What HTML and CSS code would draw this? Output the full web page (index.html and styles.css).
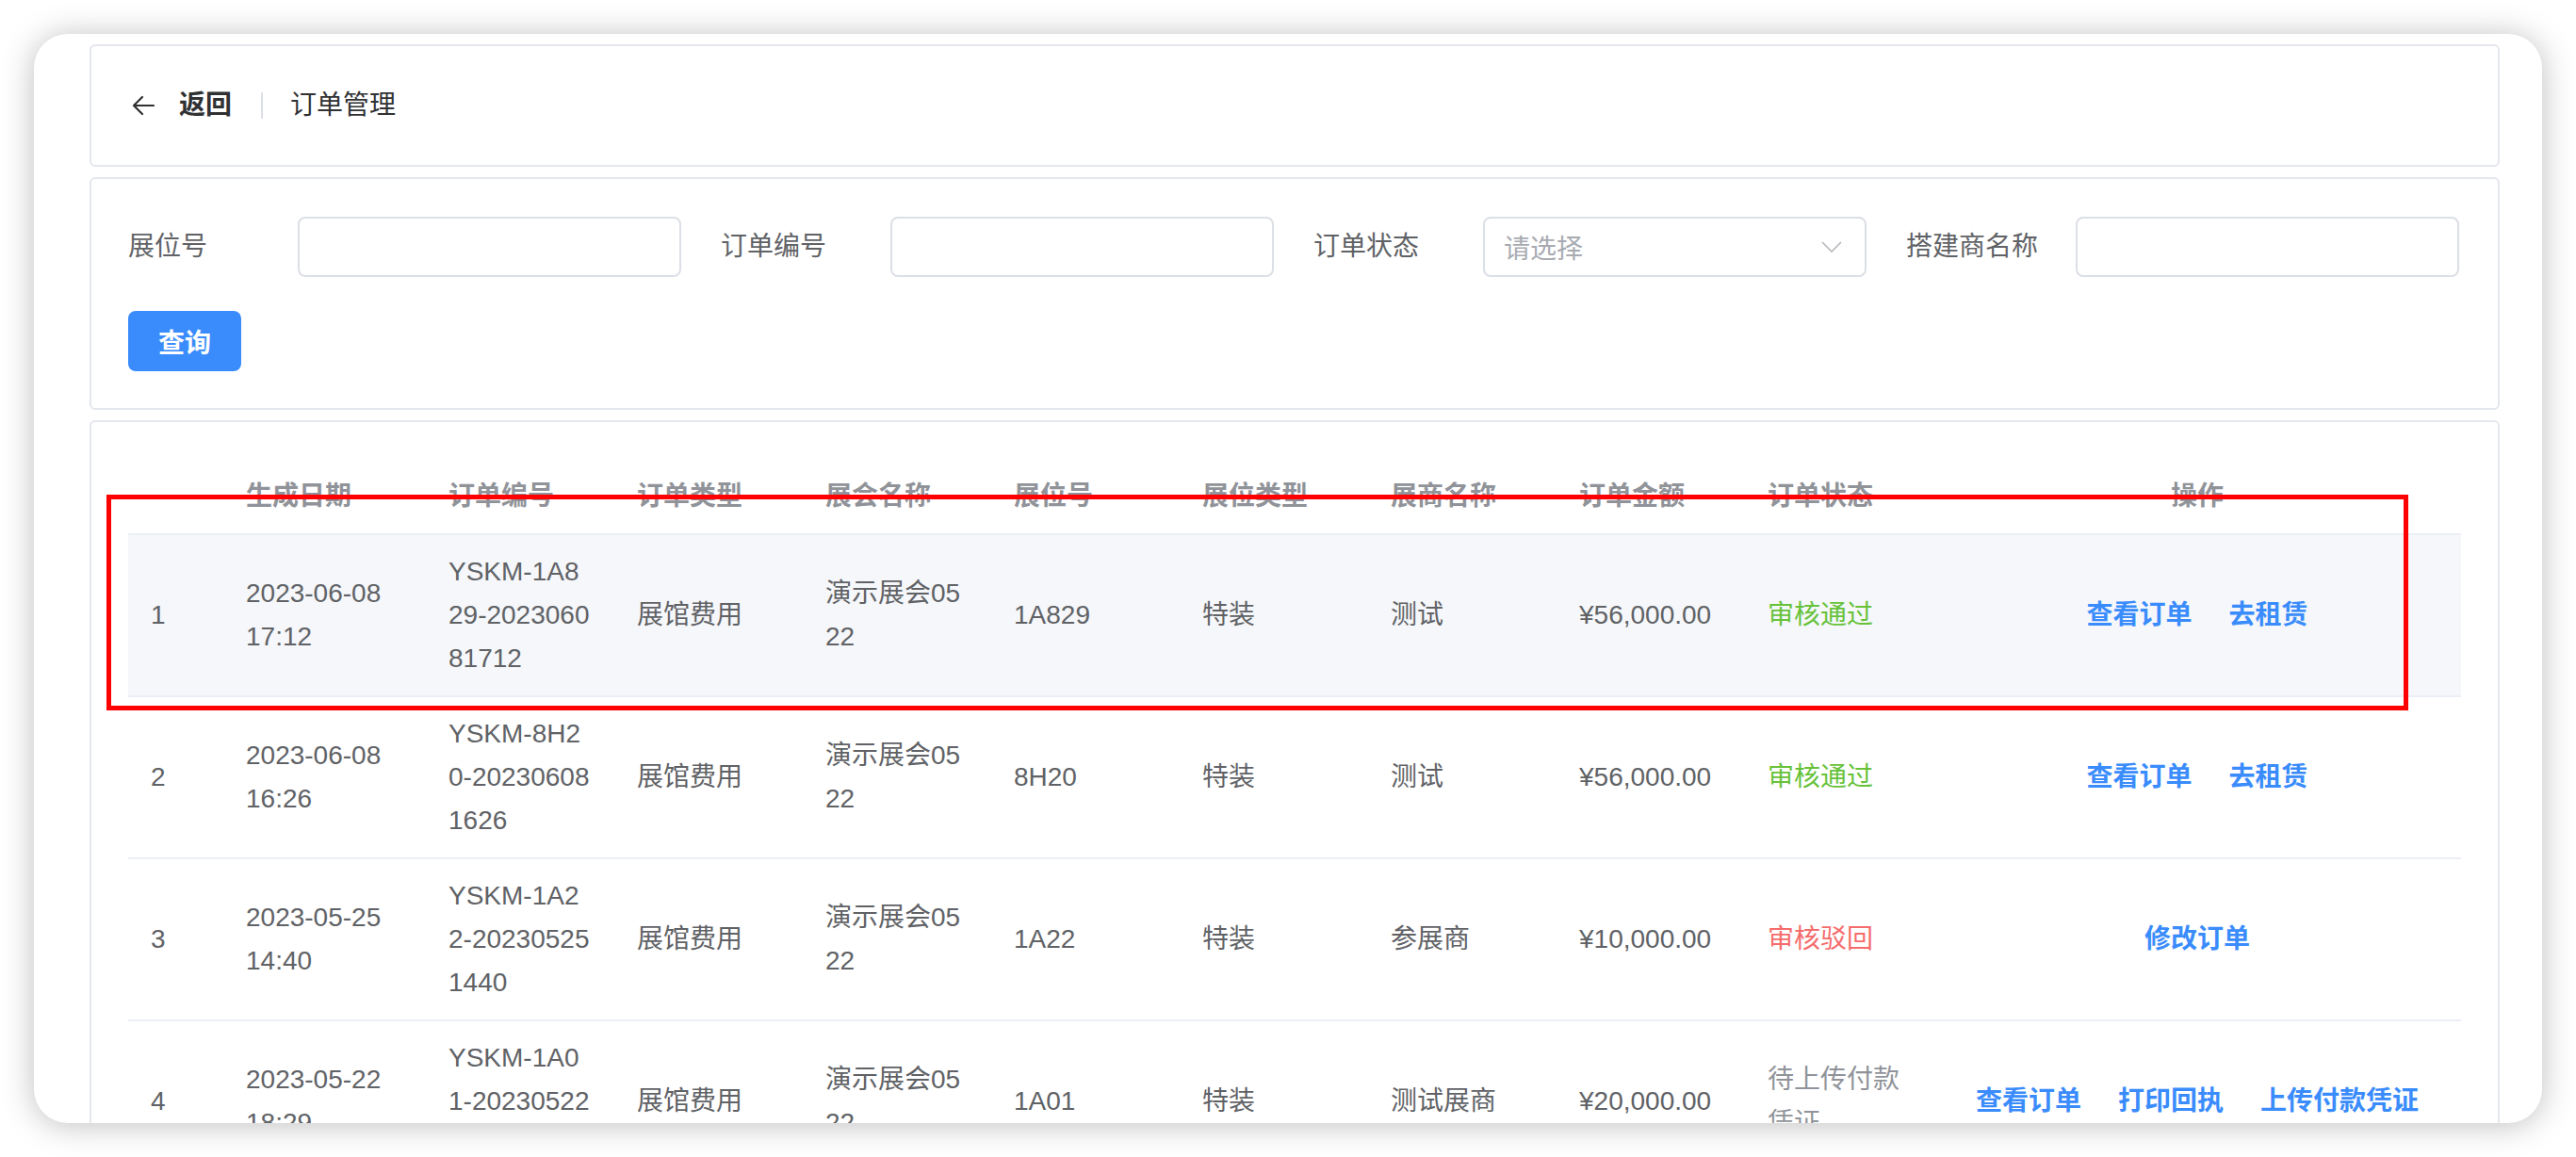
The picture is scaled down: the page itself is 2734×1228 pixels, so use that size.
FILE: index.html
```html
<!DOCTYPE html>
<html lang="zh-CN">
<head>
<meta charset="utf-8">
<title>订单管理</title>
<link rel="stylesheet" href="styles.css">
</head>
<body>
<div class="stage">
  <div class="window">
    <div class="card header-card">
      <span class="back">
        <svg class="back-icon" width="24" height="22" viewBox="0 0 24 22"><path d="M2 11H23M11 2L2 11L11 20" fill="none" stroke="#303133" stroke-width="2.2" stroke-linecap="round" stroke-linejoin="round"/></svg>
        <span class="back-text">返回</span>
      </span>
      <span class="divider"></span>
      <span class="page-title">订单管理</span>
    </div>

    <div class="card filter-card">
      <div class="form-row">
        <div class="form-item"><label class="form-label">展位号</label><div class="input"></div></div>
        <div class="form-item"><label class="form-label">订单编号</label><div class="input"></div></div>
        <div class="form-item"><label class="form-label">订单状态</label>
          <div class="input select"><span class="placeholder">请选择</span>
            <svg class="chevron" width="22" height="12" viewBox="0 0 22 12"><path d="M1 1L11 11L21 1" fill="none" stroke="#b4b7bd" stroke-width="1.6"/></svg>
          </div>
        </div>
        <div class="form-item"><label class="form-label">搭建商名称</label><div class="input"></div></div>
      </div>
      <button class="btn-primary">查询</button>
    </div>

    <div class="card table-card">
      <table class="grid">
        <colgroup>
          <col class="c-idx"><col class="c-date"><col class="c-std"><col class="c-std"><col class="c-std"><col class="c-std"><col class="c-std"><col class="c-std"><col class="c-std"><col class="c-std"><col class="c-ops">
        </colgroup>
        <thead>
          <tr><th></th><th>生成日期</th><th>订单编号</th><th>订单类型</th><th>展会名称</th><th>展位号</th><th>展位类型</th><th>展商名称</th><th>订单金额</th><th>订单状态</th><th class="center">操作</th></tr>
        </thead>
        <tbody>
          <tr class="hover">
            <td>1</td><td>2023-06-08 17:12</td><td class="brk">YSKM-1A829-202306081712</td><td>展馆费用</td><td class="brk">演示展会0522</td><td>1A829</td><td>特装</td><td>测试</td><td>¥56,000.00</td><td class="st-ok">审核通过</td>
            <td><div class="ops"><span class="link">查看订单</span><span class="link">去租赁</span></div></td>
          </tr>
          <tr>
            <td>2</td><td>2023-06-08 16:26</td><td class="brk">YSKM-8H20-202306081626</td><td>展馆费用</td><td class="brk">演示展会0522</td><td>8H20</td><td>特装</td><td>测试</td><td>¥56,000.00</td><td class="st-ok">审核通过</td>
            <td><div class="ops"><span class="link">查看订单</span><span class="link">去租赁</span></div></td>
          </tr>
          <tr>
            <td>3</td><td>2023-05-25 14:40</td><td class="brk">YSKM-1A22-202305251440</td><td>展馆费用</td><td class="brk">演示展会0522</td><td>1A22</td><td>特装</td><td>参展商</td><td>¥10,000.00</td><td class="st-bad">审核驳回</td>
            <td><div class="ops"><span class="link">修改订单</span></div></td>
          </tr>
          <tr>
            <td>4</td><td>2023-05-22 18:29</td><td class="brk">YSKM-1A01-202305221829</td><td>展馆费用</td><td class="brk">演示展会0522</td><td>1A01</td><td>特装</td><td>测试展商</td><td>¥20,000.00</td><td class="st-wait">待上传付款凭证</td>
            <td><div class="ops"><span class="link">查看订单</span><span class="link">打印回执</span><span class="link">上传付款凭证</span></div></td>
          </tr>
        </tbody>
      </table>
    </div>

    <div class="highlight-box"></div>
  </div>
</div>
</body>
</html>
```

FILE: styles.css
```css
* { box-sizing: border-box; }

html, body {
  margin: 0;
  padding: 0;
  background: #ffffff;
}

body {
  font-family: "Liberation Sans", "Noto Sans CJK SC", sans-serif;
  font-size: 28px;
  color: #606266;
}

.stage {
  padding: 36px;
  width: 2734px;
  height: 1228px;
}

.window {
  position: relative;
  width: 2662px;
  height: 1156px;
  background: #ffffff;
  border-radius: 36px;
  overflow: hidden;
  box-shadow: 0 2px 34px rgba(0, 0, 0, 0.26);
  padding: 11px 45px 0 59px;
  display: flex;
  flex-direction: column;
  gap: 11px;
}

.card {
  border: 2px solid #e4e7ed;
  border-radius: 6px;
  background: #ffffff;
  flex: none;
}

/* header */
.header-card {
  height: 130px;
  display: flex;
  align-items: center;
  padding: 0 40px 0 43px;
}

.back {
  display: flex;
  align-items: center;
}

.back-icon {
  display: block;
  margin-right: 26px;
}

.back-text {
  font-weight: 600;
  color: #303133;
  line-height: 40px;
}

.divider {
  width: 2px;
  height: 28px;
  background: #dcdfe6;
  margin: 0 29px 0 31px;
}

.page-title {
  color: #303133;
  line-height: 40px;
}

/* filter */
.filter-card {
  height: 247px;
  padding: 40px 39px 0 39px;
}

.form-row {
  display: flex;
  align-items: center;
  gap: 42px;
  margin-bottom: 37px;
}

.form-item {
  display: flex;
  align-items: center;
}

.form-label {
  width: 180px;
  flex: none;
  color: #606266;
  line-height: 40px;
}

.input {
  width: 407px;
  height: 64px;
  border: 2px solid #dcdfe6;
  border-radius: 8px;
  background: #ffffff;
}

.select {
  display: flex;
  align-items: center;
  justify-content: space-between;
  padding: 0 24px 0 20px;
}

.placeholder {
  color: #a8abb2;
}

.chevron {
  display: block;
}

.btn-primary {
  display: block;
  width: 120px;
  height: 64px;
  border: none;
  border-radius: 8px;
  background: #3a8cfd;
  color: #ffffff;
  font-family: "Liberation Sans", "Noto Sans CJK SC", sans-serif;
  font-size: 28px;
  font-weight: 700;
  padding: 0;
  margin-top: -1px;
}

/* table */
.table-card {
  padding: 40px 39px 0 39px;
  flex: 1;
}

.grid {
  width: 2476px;
  border-collapse: collapse;
  table-layout: fixed;
}

.c-idx { width: 101px; }
.c-date { width: 215px; }
.c-std { width: 200px; }
.c-ops { width: 560px; }

.grid th,
.grid td {
  padding: 16px 24px;
  line-height: 46px;
  text-align: left;
  vertical-align: middle;
  border-bottom: 2px solid #ebeef5;
}

.grid td.brk {
  word-break: break-all;
}

.grid th {
  color: #909399;
  font-weight: 700;
}

.grid th.center {
  text-align: center;
}

.grid td {
  color: #606266;
}

.grid tr.hover td {
  background: #f5f7fa;
}

.st-ok { color: #67c23a !important; }
.st-bad { color: #f56c6c !important; }
.st-wait { color: #909399 !important; }

.ops {
  display: flex;
  justify-content: center;
  gap: 39px;
}

.link {
  color: #3a8cfd;
  font-weight: 700;
  white-space: nowrap;
}

.highlight-box {
  position: absolute;
  left: 77px;
  top: 489px;
  width: 2443px;
  height: 229px;
  border: 5px solid #ff0000;
  pointer-events: none;
}
```
